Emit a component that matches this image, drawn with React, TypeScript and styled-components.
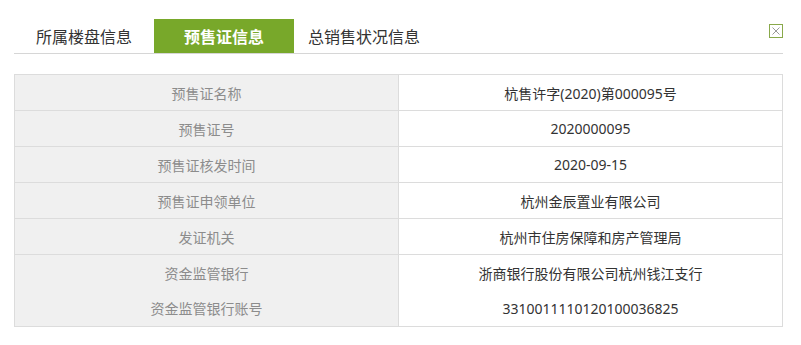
import styled, { createGlobalStyle } from "styled-components"

const GlobalStyle = createGlobalStyle`
  body {
    margin: 0;
    background: #fff;
    font-family: "Noto Sans", "Noto Sans CJK SC", sans-serif;
  }
`

const Wrapper = styled.div`
  width: 801px;
  padding: 19px 0 0 14px;
  box-sizing: border-box;
`

const TabBar = styled.div`
  display: flex;
  align-items: stretch;
  width: 769px;
  height: 35px;
  border-bottom: 1px solid #d6d6d6;
  box-sizing: border-box;
`

const Tab = styled.div<{ $active?: boolean }>`
  width: 140px;
  display: flex;
  align-items: center;
  justify-content: center;
  font-size: 16px;
  color: ${(p) => (p.$active ? "#fff" : "#333")};
  font-weight: ${(p) => (p.$active ? 700 : 400)};
  background: ${(p) => (p.$active ? "#78a82a" : "transparent")};
`

const Close = styled.div`
  margin-left: auto;
  margin-top: 5px;
  width: 14px;
  height: 14px;
  border: 1px solid #89a94a;
  box-sizing: border-box;
  display: flex;
  align-items: center;
  justify-content: center;
`

const Table = styled.table`
  margin-top: 20px;
  width: 769px;
  border-collapse: collapse;
  border: 1px solid #dcdcdc;
  font-size: 14px;
`

const Row = styled.tr<{ $noLine?: boolean }>`
  height: 36px;
  border-top: ${(p) => (p.$noLine ? "none" : "1px solid #dcdcdc")};
`

const Label = styled.td`
  width: 383px;
  background: #f0f0f0;
  color: #8c8c8c;
  text-align: center;
  border-right: 1px solid #dcdcdc;
  padding: 0;
`

const Value = styled.td`
  color: #333;
  text-align: center;
  padding: 0;
`

const rows = [
  ["预售证名称", "杭售许字(2020)第000095号"],
  ["预售证号", "2020000095"],
  ["预售证核发时间", "2020-09-15"],
  ["预售证申领单位", "杭州金辰置业有限公司"],
  ["发证机关", "杭州市住房保障和房产管理局"],
  ["资金监管银行", "浙商银行股份有限公司杭州钱江支行"],
  ["资金监管银行账号", "3310011110120100036825"],
]

export default function App() {
  return (
    <Wrapper>
      <GlobalStyle />
      <TabBar>
        <Tab>所属楼盘信息</Tab>
        <Tab $active>预售证信息</Tab>
        <Tab>总销售状况信息</Tab>
        <Close>
          <svg width="10" height="10" viewBox="0 0 10 10">
            <path d="M1.5 1.5 L8.5 8.5 M8.5 1.5 L1.5 8.5" stroke="#9a9a9a" strokeWidth="1" />
          </svg>
        </Close>
      </TabBar>
      <Table>
        <tbody>
          {rows.map(([k, v], i) => (
            <Row key={k} $noLine={i === 6}>
              <Label>{k}</Label>
              <Value>{v}</Value>
            </Row>
          ))}
        </tbody>
      </Table>
    </Wrapper>
  )
}
